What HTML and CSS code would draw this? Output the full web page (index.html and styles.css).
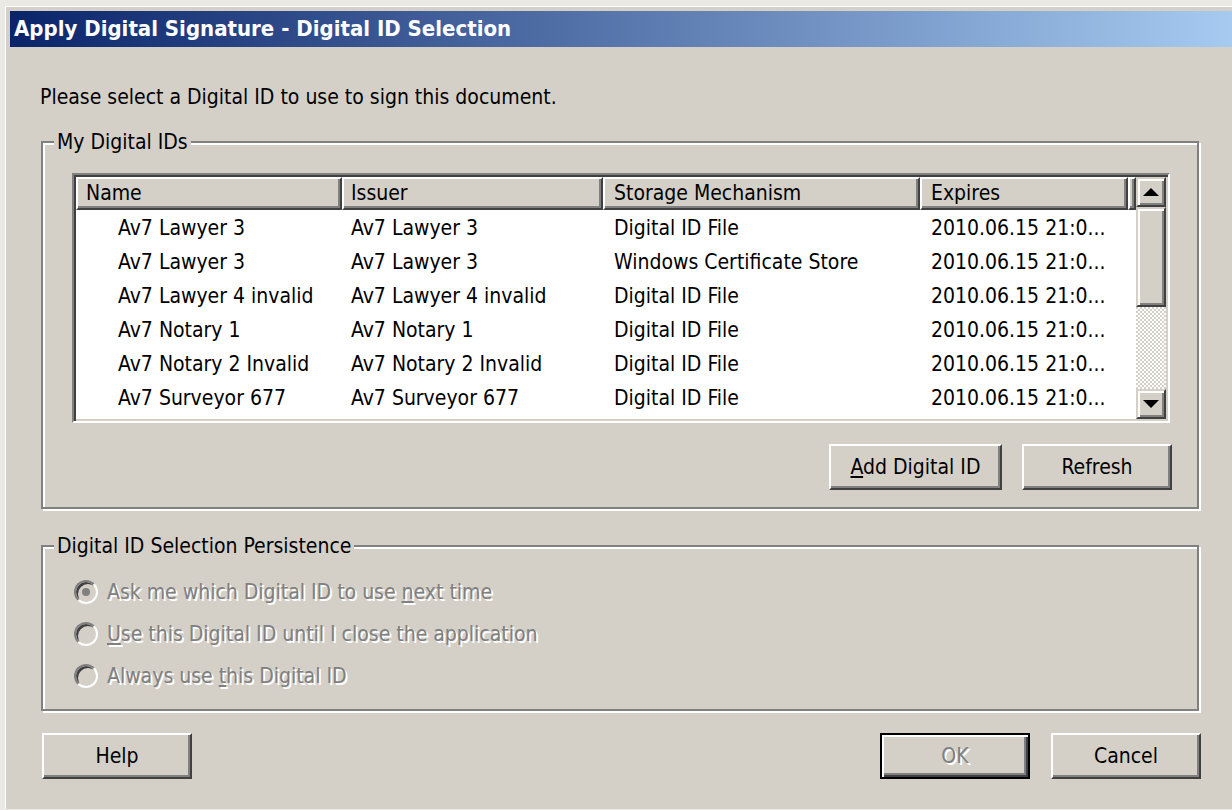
FILE: index.html
```html
<!DOCTYPE html>
<html lang="en">
<head>
<meta charset="utf-8">
<title>Apply Digital Signature - Digital ID Selection</title>
<link rel="stylesheet" href="styles.css">
</head>
<body>
<div class="window">
  <div class="titlebar">Apply Digital Signature - Digital ID Selection</div>
  <div class="client">
    <p class="prompt">Please select a Digital ID to use to sign this document.</p>

    <fieldset class="group group-ids">
      <legend>My Digital IDs</legend>
      <div class="group-body ids-body">
        <div class="listview">
          <div class="list-main">
            <div class="list-header">
              <div class="hcell c-name">Name</div>
              <div class="hcell c-issuer">Issuer</div>
              <div class="hcell c-storage">Storage Mechanism</div>
              <div class="hcell c-expires">Expires</div>
              <div class="hcell c-fill"></div>
            </div>
            <div class="list-rows">
              <div class="row"><span class="cell c-name">Av7 Lawyer 3</span><span class="cell c-issuer">Av7 Lawyer 3</span><span class="cell c-storage">Digital ID File</span><span class="cell c-expires">2010.06.15 21:0...</span></div>
              <div class="row"><span class="cell c-name">Av7 Lawyer 3</span><span class="cell c-issuer">Av7 Lawyer 3</span><span class="cell c-storage">Windows Certificate Store</span><span class="cell c-expires">2010.06.15 21:0...</span></div>
              <div class="row"><span class="cell c-name">Av7 Lawyer 4 invalid</span><span class="cell c-issuer">Av7 Lawyer 4 invalid</span><span class="cell c-storage">Digital ID File</span><span class="cell c-expires">2010.06.15 21:0...</span></div>
              <div class="row"><span class="cell c-name">Av7 Notary 1</span><span class="cell c-issuer">Av7 Notary 1</span><span class="cell c-storage">Digital ID File</span><span class="cell c-expires">2010.06.15 21:0...</span></div>
              <div class="row"><span class="cell c-name">Av7 Notary 2 Invalid</span><span class="cell c-issuer">Av7 Notary 2 Invalid</span><span class="cell c-storage">Digital ID File</span><span class="cell c-expires">2010.06.15 21:0...</span></div>
              <div class="row"><span class="cell c-name">Av7 Surveyor 677</span><span class="cell c-issuer">Av7 Surveyor 677</span><span class="cell c-storage">Digital ID File</span><span class="cell c-expires">2010.06.15 21:0...</span></div>
            </div>
          </div>
          <div class="vscroll">
            <div class="sb-btn">
              <svg width="16" height="8" viewBox="0 0 16 8"><polygon points="8,0 16,8 0,8" fill="#000"/></svg>
            </div>
            <div class="sb-thumb"></div>
            <div class="sb-track"></div>
            <div class="sb-btn">
              <svg width="16" height="8" viewBox="0 0 16 8"><polygon points="0,0 16,0 8,8" fill="#000"/></svg>
            </div>
          </div>
        </div>
        <div class="list-actions">
          <button class="btn btn-add" type="button"><u>A</u>dd Digital ID</button>
          <button class="btn" type="button">Refresh</button>
        </div>
      </div>
    </fieldset>

    <fieldset class="group group-persist">
      <legend>Digital ID Selection Persistence</legend>
      <div class="group-body persist-body">
        <label class="radio-row"><span class="radio checked"></span><span class="radio-text">Ask me which Digital ID to use <u>n</u>ext time</span></label>
        <label class="radio-row"><span class="radio"></span><span class="radio-text"><u>U</u>se this Digital ID until I close the application</span></label>
        <label class="radio-row"><span class="radio"></span><span class="radio-text">Always use <u>t</u>his Digital ID</span></label>
      </div>
    </fieldset>

    <div class="dialog-buttons">
      <button class="btn" type="button">Help</button>
      <div class="btn-pair">
        <button class="btn btn-default" type="button" disabled>OK</button>
        <button class="btn" type="button">Cancel</button>
      </div>
    </div>
  </div>
</div>
</body>
</html>
```

FILE: styles.css
```css
html, body {
  margin: 0;
  padding: 0;
}

body {
  background: #ebe9e4;
  font-family: "DejaVu Sans Condensed", "DejaVu Sans", sans-serif;
  font-stretch: condensed;
  font-size: 21px;
  color: #000;
  height: 810px;
  overflow: hidden;
}

/* window frame */
.window {
  margin: 6px 0 0 5px;
  border-top: 1px solid #fff;
  border-left: 1px solid #fff;
  padding: 4px 0 0 4px;
  background: #d4d0c8;
  height: 803px;
  box-sizing: border-box;
}

.titlebar {
  height: 36px;
  line-height: 36px;
  padding-left: 4px;
  color: #fff;
  font-weight: bold;
  font-size: 22px;
  background: linear-gradient(to right, #0a246a 0%, #a6caf0 100%);
  white-space: nowrap;
}

.client {
  padding: 0 33px 0 31px;
}

.prompt {
  margin: 38px 0 0 -1px;
  line-height: 24px;
}

/* etched group boxes */
.group {
  margin: 21px 0 0 0;
  padding: 0;
  border: 2px solid #808080;
  box-shadow: inset 2px 2px 0 #fff, 2px 2px 0 #fff;
  min-width: 0;
}

.group legend {
  margin-left: 11px;
  padding: 0 3px;
  line-height: 24px;
  background: #d4d0c8;
}

.ids-body {
  padding: 19px 27px 17px 29px;
}

/* list view */
.listview {
  display: flex;
  height: 250px;
  box-sizing: border-box;
  border: 2px solid;
  border-color: #808080 #fff #fff #808080;
  box-shadow: inset 2px 2px 0 #404040, inset -2px -2px 0 #d4d0c8;
  padding: 2px;
  background: #fff;
}

.list-main {
  flex: 1;
  min-width: 0;
  overflow: hidden;
}

.list-header {
  display: flex;
  height: 33px;
}

.hcell {
  box-sizing: border-box;
  height: 33px;
  line-height: 29px;
  padding-left: 8px;
  background: #d4d0c8;
  border-top: 2px solid #fff;
  border-left: 2px solid #fff;
  border-right: 2px solid #404040;
  border-bottom: 2px solid #404040;
  box-shadow: inset -2px -2px 0 #808080;
  white-space: nowrap;
  overflow: hidden;
}

.c-name { width: 266px; }
.c-issuer { width: 261px; }
.c-storage { width: 317px; }
.c-expires { width: 208px; }
.c-fill { width: 8px; padding: 0; }

.hcell.c-issuer { padding-left: 7px; }
.hcell.c-storage { padding-left: 9px; }
.hcell.c-expires { padding-left: 9px; }

.row {
  display: flex;
  height: 34px;
  line-height: 36px;
  white-space: nowrap;
}

.cell {
  box-sizing: border-box;
  overflow: hidden;
  padding-left: 11px;
}

.cell.c-name { padding-left: 42px; }
.cell.c-issuer { padding-left: 9px; }

/* vertical scroll bar */
.vscroll {
  width: 30px;
  display: flex;
  flex-direction: column;
}

.sb-btn,
.sb-thumb {
  box-sizing: border-box;
  background: #d4d0c8;
  border-top: 2px solid #d4d0c8;
  border-left: 2px solid #d4d0c8;
  border-right: 2px solid #404040;
  border-bottom: 2px solid #404040;
  box-shadow: inset 2px 2px 0 #fff, inset -2px -2px 0 #808080;
}

.sb-btn {
  height: 30px;
  display: flex;
  align-items: center;
  justify-content: center;
}

.sb-btn svg {
  display: block;
}

.sb-thumb {
  height: 100px;
}

.sb-track {
  flex: 1;
  background: repeating-conic-gradient(#fff 0 25%, #d4d0c8 0 50%) 0 0 / 4px 4px;
}

/* buttons */
.btn {
  box-sizing: border-box;
  width: 150px;
  height: 46px;
  margin: 0;
  padding: 0;
  font: inherit;
  color: #000;
  background: #d4d0c8;
  border: 2px solid;
  border-color: #fff #404040 #404040 #fff;
  box-shadow: inset -2px -2px 0 #808080;
  cursor: default;
}

.btn-add {
  width: 173px;
}

.btn-default {
  border-color: #000;
  box-shadow: inset 2px 2px 0 #fff, inset -2px -2px 0 #404040, inset -4px -4px 0 #808080;
}

.btn:disabled {
  color: #808080;
  text-shadow: 2px 2px 0 #fff;
}

.list-actions {
  display: flex;
  justify-content: flex-end;
  gap: 20px;
  margin: 21px -2px 0 0;
}

/* radio options */
.group-persist {
  margin-top: 25px;
}

.persist-body {
  padding: 13px 20px 12px 31px;
}

.radio-row {
  display: flex;
  align-items: center;
  height: 42px;
  color: #808080;
  text-shadow: 2px 2px 0 #fff;
}

.radio {
  position: relative;
  box-sizing: border-box;
  width: 24px;
  height: 24px;
  margin-right: 9px;
  border-radius: 50%;
  border: 2px solid;
  border-color: #808080 #fff #fff #808080;
  box-shadow: inset 2px 2px 0 #404040;
  background: #d4d0c8;
  flex: none;
}

.radio.checked::after {
  content: "";
  position: absolute;
  left: 6px;
  top: 6px;
  width: 8px;
  height: 8px;
  border-radius: 50%;
  background: #808080;
}

.dialog-buttons {
  display: flex;
  justify-content: space-between;
  margin: 22px -2px 0 1px;
}

.btn-pair {
  display: flex;
  gap: 21px;
}
```
